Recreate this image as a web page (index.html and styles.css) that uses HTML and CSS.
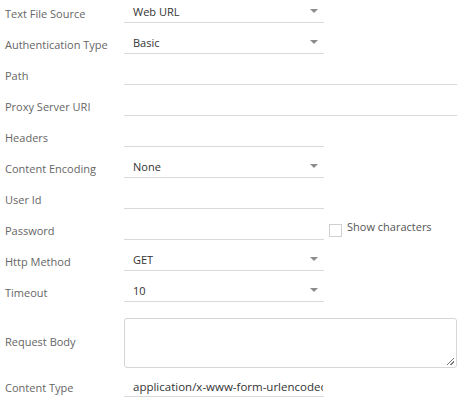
FILE: index.html
```html
<!DOCTYPE html>
<html>
<head>
<meta charset="utf-8">
<link rel="stylesheet" href="styles.css">
</head>
<body>
<div class="form">
  <div class="row">
    <div class="label">Text File Source</div>
    <div class="field select"><span class="value">Web URL</span><span class="arrow"></span></div>
  </div>
  <div class="row">
    <div class="label">Authentication Type</div>
    <div class="field select"><span class="value">Basic</span><span class="arrow"></span></div>
  </div>
  <div class="row">
    <div class="label">Path</div>
    <div class="field wide"></div>
  </div>
  <div class="row">
    <div class="label">Proxy Server URI</div>
    <div class="field wide"></div>
  </div>
  <div class="row">
    <div class="label">Headers</div>
    <div class="field"></div>
  </div>
  <div class="row">
    <div class="label">Content Encoding</div>
    <div class="field select"><span class="value">None</span><span class="arrow"></span></div>
  </div>
  <div class="row">
    <div class="label">User Id</div>
    <div class="field"></div>
  </div>
  <div class="row">
    <div class="label">Password</div>
    <div class="field"></div>
    <label class="check"><span class="box"></span><span class="check-text">Show characters</span></label>
  </div>
  <div class="row">
    <div class="label">Http Method</div>
    <div class="field select"><span class="value">GET</span><span class="arrow"></span></div>
  </div>
  <div class="row">
    <div class="label">Timeout</div>
    <div class="field select"><span class="value">10</span><span class="arrow"></span></div>
  </div>
  <div class="row area-row">
    <div class="label">Request Body</div>
    <div class="textarea"><span class="grip"></span></div>
  </div>
  <div class="row last">
    <div class="label">Content Type</div>
    <div class="field tight"><span class="value clip">application/x-www-form-urlencoded</span></div>
  </div>
</div>
</body>
</html>
```
FILE: styles.css
```css
html, body {
  margin: 0;
  padding: 0;
  background: #fff;
}
body {
  font-family: "Open Sans", "Noto Sans", sans-serif;
  font-size: 11px;
  color: #333;
}
.form {
  display: flex;
  flex-direction: column;
  gap: 9px;
  padding-top: 1px;
}
.row {
  display: flex;
  align-items: center;
  height: 22px;
}
.label {
  width: 119px;
  padding-left: 5px;
  color: #666;
  padding-top: 3px;
  flex: none;
}
.field {
  box-sizing: border-box;
  width: 200px;
  height: 22px;
  border-bottom: 1px solid #d9d9d9;
  display: flex;
  align-items: center;
  padding-left: 9px;
  padding-right: 6px;
  position: relative;
  flex: none;
}
.field.wide {
  width: 333px;
}
.field.tight {
  padding-right: 1px;
}
.value {
  color: #333;
  flex: 1;
  min-width: 0;
  white-space: nowrap;
  padding-bottom: 1px;
}
.clip {
  overflow: hidden;
  text-overflow: clip;
  padding-top: 3px;
  font-size: 11.5px;
}
.arrow {
  width: 0;
  height: 0;
  border-left: 4px solid transparent;
  border-right: 4px solid transparent;
  border-top: 4px solid #8c8c8c;
  margin-bottom: 2px;
}
.check {
  display: flex;
  align-items: center;
  margin-left: 5px;
  padding-top: 3px;
}
.box {
  box-sizing: border-box;
  width: 13px;
  height: 13px;
  border: 1px solid #d0d0d0;
  background: #fff;
}
.check-text {
  margin-left: 5px;
  color: #555;
  margin-top: -8px;
}
.area-row {
  height: 50px;
  margin-top: 7px;
}
.area-row .label {
  padding-top: 0;
  padding-bottom: 4px;
}
.textarea {
  box-sizing: border-box;
  width: 333px;
  height: 50px;
  border: 1px solid #d6d6d6;
  border-radius: 3px;
  position: relative;
  flex: none;
}
.grip {
  position: absolute;
  right: 2px;
  bottom: 2px;
  width: 7px;
  height: 7px;
  background: linear-gradient(135deg, transparent 45%, #777 45%, #777 55%, transparent 55%, transparent 70%, #777 70%, #777 80%, transparent 80%);
}
.last {
  margin-top: -2px;
}
```
